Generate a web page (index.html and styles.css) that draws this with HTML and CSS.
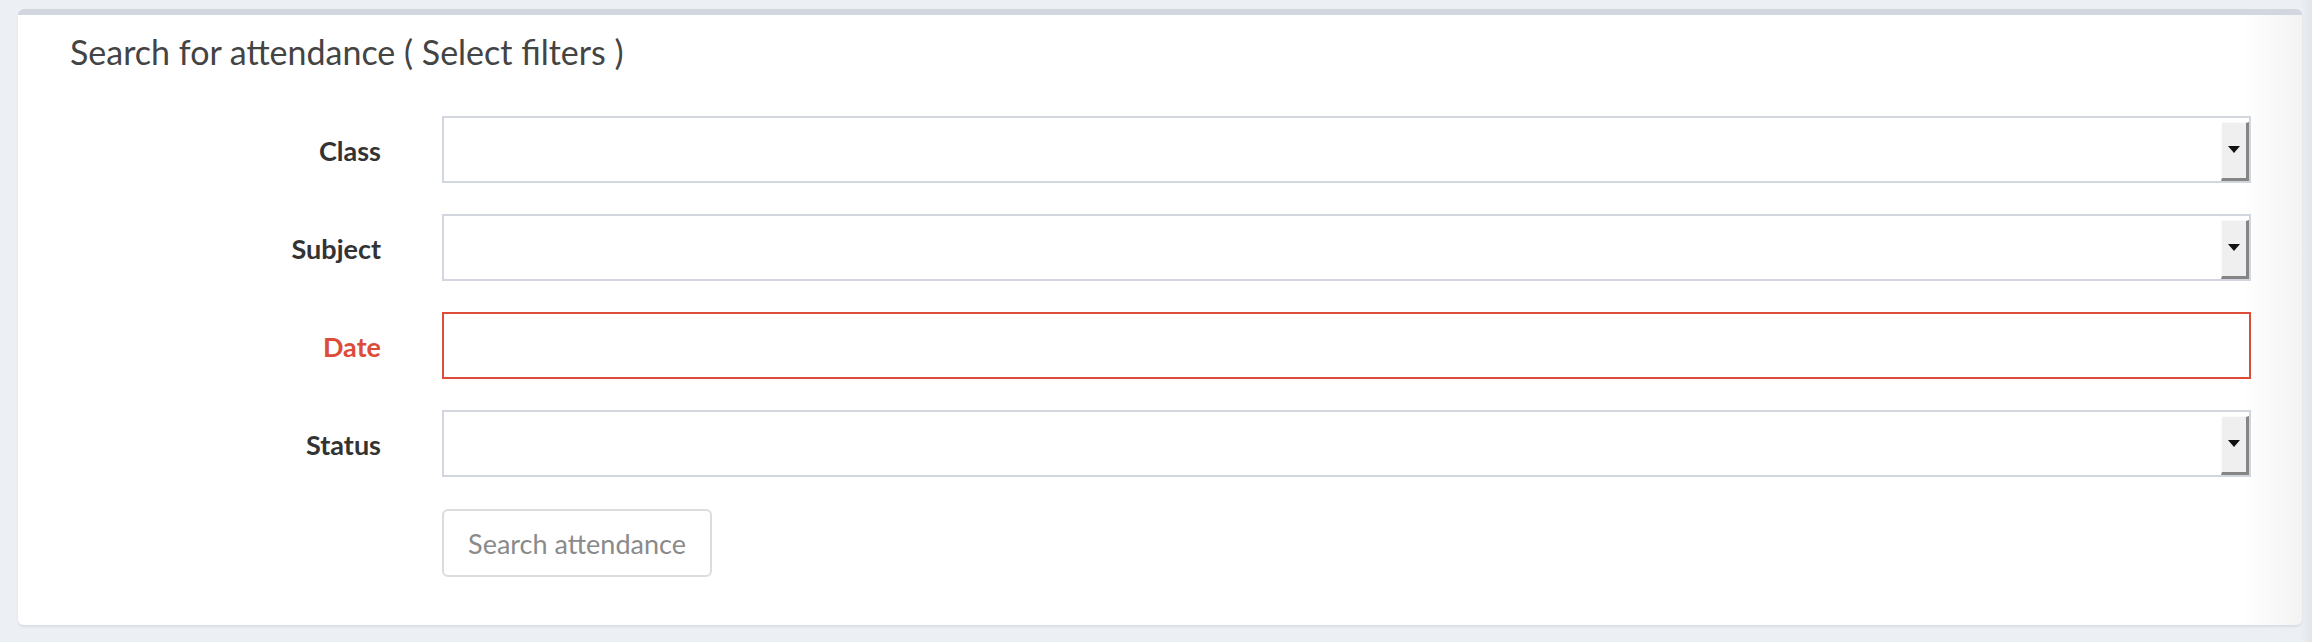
FILE: index.html
```html
<!DOCTYPE html>
<html lang="en">
<head>
<meta charset="utf-8">
<title>Search for attendance</title>
<link rel="stylesheet" href="styles.css">
</head>
<body>
<div class="page">
  <section class="box">
    <header class="box-header">
      <h3 class="box-title">Search for attendance ( Select filters )</h3>
    </header>
    <form class="box-body">
      <div class="form-row">
        <label class="form-label">Class</label>
        <div class="select-box"><span class="select-arrow"><span class="tri"></span></span></div>
      </div>
      <div class="form-row">
        <label class="form-label">Subject</label>
        <div class="select-box"><span class="select-arrow"><span class="tri"></span></span></div>
      </div>
      <div class="form-row has-error">
        <label class="form-label">Date</label>
        <div class="text-input"></div>
      </div>
      <div class="form-row">
        <label class="form-label">Status</label>
        <div class="select-box"><span class="select-arrow"><span class="tri"></span></span></div>
      </div>
      <div class="form-row">
        <span class="form-label"></span>
        <div class="actions"><button type="button" class="btn" disabled>Search attendance</button></div>
      </div>
    </form>
  </section>
</div>
</body>
</html>
```

FILE: styles.css
```css
html, body {
  margin: 0;
  padding: 0;
}
body {
  background: linear-gradient(to right, #ecf0f5 calc(100% - 12px), #e1e4e9);
  font-family: "Lato", "Liberation Sans", sans-serif;
  width: 2312px;
  height: 642px;
  overflow: hidden;
}
.page {
  padding: 9px 10px 0 18px;
}
.box {
  background: linear-gradient(to right, #ffffff calc(100% - 60px), #f3f3f3);
  border-top: 6px solid #d2d6de;
  border-radius: 6px;
  box-shadow: 0 2px 2px rgba(0, 0, 0, 0.08);
  height: 610px;
  box-sizing: content-box;
}
.box-header {
  padding: 17px 0 44px 52px;
}
.box-title {
  margin: 0;
  font-size: 34px;
  line-height: 40px;
  font-weight: 400;
  color: #444;
  letter-spacing: 0;
}
.box-body {
  display: flex;
  flex-direction: column;
  gap: 31px;
  padding-right: 51px;
}
.form-row {
  display: grid;
  grid-template-columns: 363px 1fr;
  column-gap: 61px;
  height: 67px;
}
.form-label {
  text-align: right;
  font-size: 27px;
  font-weight: 700;
  line-height: 69px;
  color: #333;
}
.has-error .form-label {
  color: #dd4b39;
}
.select-box,
.text-input {
  border: 2px solid #d2d6de;
  background: #fff;
  box-sizing: border-box;
  height: 67px;
}
.has-error .text-input {
  border-color: #dd4b39;
}
.select-box {
  display: flex;
  justify-content: flex-end;
  align-items: flex-end;
}
.select-arrow {
  width: 28px;
  height: 59px;
  box-sizing: border-box;
  background: #efefef;
  border-top: 1px solid #fafafa;
  border-left: 1px solid #fafafa;
  border-right: 3px solid #858585;
  border-bottom: 3px solid #858585;
  display: flex;
  align-items: center;
  justify-content: center;
}
.tri {
  width: 0;
  height: 0;
  border-left: 6px solid transparent;
  border-right: 6px solid transparent;
  border-top: 7px solid #111;
  margin-top: -3px;
}
.actions {
  display: flex;
}
.btn {
  height: 68px;
  width: 270px;
  box-sizing: border-box;
  border: 2px solid #dcdcdc;
  border-radius: 6px;
  background: #fff;
  color: #8a8a8a;
  font-family: "Lato", "Liberation Sans", sans-serif;
  font-size: 27px;
  font-weight: 400;
  padding: 0;
  margin-top: 1px;
}
```
